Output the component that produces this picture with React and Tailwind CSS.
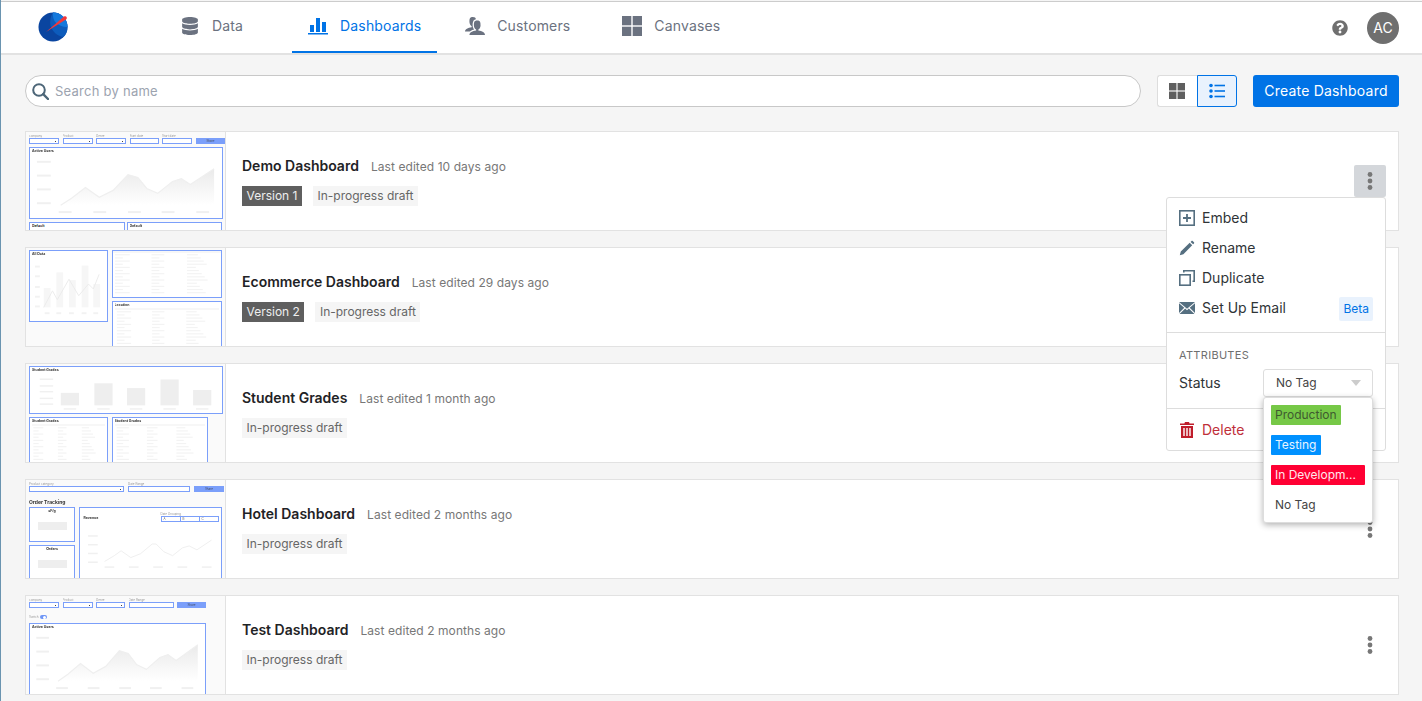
import { FaDatabase, FaQuestionCircle } from "react-icons/fa";
import { ImUsers } from "react-icons/im";

const BLUE = "#0073e6";

const Logo = () => (
  <svg width="30" height="30" viewBox="0 0 30 30" className="-mt-[2px]">
    <circle cx="15" cy="15" r="14.5" fill="#0a45a0" />
    <path d="M15 .5a14.500 14.500 0 0 1 14.500 14.500c0 4-1.500 7.500-4 10-6-1-11-5-13-11-1-5 0-10 2.500-13.500z" fill="#0d5cbc" />
    <path d="M15 .5c4 0 7.500 1.500 10 4 2.500 2.500 4.500 6 4.500 10.500-5 0-10-2-13-6-1.500-3-2-6-1.500-8.500z" fill="#1479dd" />
    <path d="M8 20 26 4.500c1.700-1.200 3.800 1 2.300 2.700z" fill="#f2383a" />
  </svg>
);

const BarsIcon = ({ className }) => (
  <svg width="20" height="18" viewBox="0 0 20 18" fill="currentColor" className={className}>
    <rect x="2" y="8" width="4" height="7" />
    <rect x="8" y="1" width="4" height="14" />
    <rect x="14" y="5" width="4" height="10" />
    <rect x="0" y="16" width="20" height="1.500" />
  </svg>
);

const GridIcon = ({ size = 20, color = "#6b7280" }) => (
  <svg width={size} height={size} viewBox="0 0 20 20" fill={color}>
    <rect x="0" y="0" width="9.300" height="9.300" />
    <rect x="10.700" y="0" width="9.300" height="9.300" />
    <rect x="0" y="10.700" width="9.300" height="9.300" />
    <rect x="10.700" y="10.700" width="9.300" height="9.300" />
  </svg>
);

const SearchIcon = () => (
  <svg width="17" height="17" viewBox="0 0 17 17" fill="none" stroke="#4d6678" strokeWidth="2">
    <circle cx="7" cy="7" r="5.800" />
    <path d="M11.200 11.200 16 16" strokeWidth="2.400" strokeLinecap="round" />
  </svg>
);

const ListIcon = () => (
  <svg width="16" height="16" viewBox="0 0 16 16" fill="#0073e6">
    <circle cx="2" cy="2.500" r="1.800" />
    <circle cx="2" cy="8" r="1.800" />
    <circle cx="2" cy="13.500" r="1.800" />
    <rect x="5.500" y="1.700" width="10.500" height="1.600" />
    <rect x="5.500" y="7.200" width="10.500" height="1.600" />
    <rect x="5.500" y="12.700" width="10.500" height="1.600" />
  </svg>
);

const Kebab = () => (
  <svg width="6" height="18" viewBox="0 0 6 18" fill="#777777">
    <circle cx="3" cy="2.500" r="2.400" />
    <circle cx="3" cy="9" r="2.400" />
    <circle cx="3" cy="15.500" r="2.400" />
  </svg>
);

const EmbedIcon = () => (
  <svg width="16" height="16" viewBox="0 0 16 16" fill="none" stroke="#556f80" strokeWidth="1.600">
    <rect x=".8" y=".8" width="14.400" height="14.400" />
    <path d="M8 4v8M4 8h8" strokeWidth="1.800" />
  </svg>
);

const PencilIcon = () => (
  <svg width="16" height="16" viewBox="0 0 16 16" fill="#556f80">
    <path d="M.8 15.200l1-3.700L10.700 2.800l2.500 2.500-8.800 8.900zM11.600 1.900l.9-.9c.4-.3.900-.3 1.200 0l1.300 1.300c.3.300.3.800 0 1.100l-.9.900z" />
  </svg>
);

const CopyIcon = () => (
  <svg width="16" height="16" viewBox="0 0 16 16" fill="none" stroke="#556f80" strokeWidth="1.600">
    <rect x=".8" y="4.800" width="10.400" height="10.400" />
    <path d="M4.800 2.500V.8h10.400v10.400h-1.700" />
  </svg>
);

const MailIcon = () => (
  <svg width="16" height="12" viewBox="0 0 16 12" fill="#556f80">
    <path d="M0 0h16L8 6.800zM0 1.300v9.600L5.300 5.800zM16 1.300v9.600L10.700 5.800zM6.200 6.600 8 8.200l1.800-1.600L15.500 12H.5z" />
  </svg>
);

const TrashIcon = () => (
  <svg width="14" height="16" viewBox="0 0 14 16" fill="#bf1d2b">
    <path d="M5 0h4l.6 1.500H14V3H0V1.500h4.400zM1 4h12v12H1zM3.300 6v8h1.400V6zM6.300 6v8h1.400V6zM9.300 6v8h1.400V6z" fillRule="evenodd" />
  </svg>
);

// the thumbnails are tiny previews of the dashboards
const FilterField = ({ label, width, select }) => (
  <div style={{ width }} className="shrink-0">
    <div className="text-[3px] leading-[4px] h-[4px] text-[#999999] truncate">{label}</div>
    <div className="h-[6px] border border-[#7b9ffa] bg-white relative">
      {select && <div className="absolute right-[2px] top-[1.500px] w-[1px] h-[1px] bg-[#444444]" />}
    </div>
  </div>
);

const ShareButton = ({ width }) => (
  <div style={{ width }} className="h-[6px] mt-[4px] bg-[#7b9ffa] text-[3px] leading-[6px] text-center text-[#44506a] shrink-0">Share</div>
);

const AREA_PTS = "31,58 42,51 56,40 70,50 84,43 99,27 109,30 118,41 129,46 144,34 153,31 162,37 186,21";

const AreaChart = ({ gradId }) => (
  <svg viewBox="0 0 194 71" preserveAspectRatio="none" className="absolute inset-0 w-full h-full">
    <defs>
      <linearGradient id={gradId} x1="0" y1="0" x2="0" y2="1">
        <stop offset="0" stopColor="#eaeaea" />
        <stop offset="1" stopColor="#ffffff" />
      </linearGradient>
    </defs>
    {[14, 28, 42, 56].map((y) => <rect key={y} x="7" y={y - 1} width="14" height="2" fill="#f0f0f0" />)}
    {[29, 64, 99, 133, 168].map((x) => <rect key={x} x={x} y="64" width="13" height="2" fill="#f0f0f0" />)}
    <polygon points={`31,58 ${AREA_PTS} 186,58`} fill={`url(#${gradId})`} />
    <polyline points={AREA_PTS} fill="none" stroke="#efefef" strokeWidth="1.200" />
  </svg>
);

const MiniTable = () => (
  <svg viewBox="0 0 110 48" preserveAspectRatio="none" className="w-full h-[46px]">
    <rect x="0" y="0" width="110" height="2" fill="#f7f7f7" />
    {[1, 2, 3, 4, 5, 6, 7, 8, 9, 10, 11, 12, 13].map((i) => (
      <g key={i} fill="#f3f3f3">
        <rect x="2" y={i * 3.300} width={8 + ((i * 7) % 14)} height="1.200" />
        <rect x="39" y={i * 3.300} width={8 + ((i * 5) % 10)} height="1.200" />
        <rect x="75" y={i * 3.300} width={8 + ((i * 3) % 14)} height="1.200" />
      </g>
    ))}
  </svg>
);

const PanelTitle = ({ children }) => (
  <div className="text-[3.500px] leading-[5px] font-bold text-[#333333] truncate">{children}</div>
);

const Panel = ({ className, children }) => (
  <div className={`border border-[#7b9ffa] bg-white overflow-hidden ${className}`}>{children}</div>
);

const ThumbDemo = () => (
  <>
    <div className="flex gap-[3.500px]">
      <FilterField label="company" width={30} select />
      <FilterField label="Product" width={30} select />
      <FilterField label="Genre" width={30} select />
      <FilterField label="Start date" width={29} />
      <FilterField label="Start date" width={30} />
      <ShareButton width={30} />
    </div>
    <Panel className="relative mt-[3px] w-[194px] h-[72px] px-[2px] pt-[1px]">
      <AreaChart gradId="a1" />
      <PanelTitle>Active Users</PanelTitle>
    </Panel>
    <div className="flex gap-[2px] mt-[3px]">
      <Panel className="w-[96px] h-[20px] px-[2px] pt-[1px]"><PanelTitle>Default</PanelTitle></Panel>
      <Panel className="w-[96px] h-[20px] px-[2px] pt-[1px]"><PanelTitle>Default</PanelTitle></Panel>
    </div>
  </>
);

const ThumbEcommerce = () => (
  <div className="flex gap-[3.500px]">
    <Panel className="relative w-[79px] h-[72px] px-[2px] pt-[1px] shrink-0">
      <svg viewBox="0 0 79 72" className="absolute inset-0 w-full h-full">
        {[15, 25, 36, 46, 56].map((y) => <rect key={y} x="5" y={y} width="5" height="2" fill="#f2f2f2" />)}
        {[[14, 38], [27, 22], [40, 30], [53, 15], [65, 34]].map(([x, y]) => (
          <rect key={x} x={x} y={y} width="7" height={58 - y} fill="#f6f6f6" />
        ))}
        {[15, 27, 40, 53, 65].map((x) => <rect key={x} x={x} y="63" width="5" height="2" fill="#f2f2f2" />)}
        <polyline points="14,58 23,41 28,50 40,29 50,46 60,34 65,39 71,24" fill="none" stroke="#ebebeb" strokeWidth="1" />
      </svg>
      <PanelTitle>All Data</PanelTitle>
    </Panel>
    <div className="flex flex-col gap-[2.500px] w-[112px]">
      <Panel className="h-[48px]"><MiniTable /></Panel>
      <Panel className="h-[60px] px-[2px] pt-[1px]">
        <PanelTitle>Location</PanelTitle>
        <MiniTable />
      </Panel>
    </div>
  </div>
);

const ThumbGrades = () => (
  <>
    <Panel className="relative w-[194px] h-[48px] px-[2px] pt-[1px]">
      <svg viewBox="0 0 194 48" className="absolute inset-0 w-full h-full">
        {[12, 19, 25, 32, 38].map((y) => <rect key={y} x="7" y={y} width="14" height="1.500" fill="#f0f0f0" />)}
        {[[29, 27], [64, 17], [98, 22], [133, 13], [167, 24]].map(([x, y]) => (
          <g key={x}>
            <rect x={x} y={y} width="19" height={40 - y} fill="#eeeeee" />
            <rect x={x + 3} y="43" width="13" height="1.500" fill="#f0f0f0" />
          </g>
        ))}
      </svg>
      <PanelTitle>Student Grades</PanelTitle>
    </Panel>
    <div className="flex gap-[3.500px] mt-[2.500px]">
      <Panel className="w-[79px] h-[60px] px-[2px] pt-[1px] shrink-0">
        <PanelTitle>Student Grades</PanelTitle>
        <MiniTable />
      </Panel>
      <Panel className="w-[96px] h-[60px] px-[2px] pt-[1px] shrink-0">
        <PanelTitle>Student Grades</PanelTitle>
        <MiniTable />
      </Panel>
    </div>
  </>
);

const ThumbHotel = () => (
  <>
    <div className="flex gap-[4px]">
      <FilterField label="Product category" width={95} select />
      <FilterField label="Date Range" width={62} />
      <ShareButton width={30} />
    </div>
    <div className="text-[5px] leading-[6px] font-bold text-[#333333] mt-[7px]">Order Tracking</div>
    <div className="flex gap-[3.500px] mt-[2px]">
      <div className="flex flex-col gap-[3px] w-[46px] shrink-0">
        <Panel className="h-[35px] text-center pt-[1px]">
          <PanelTitle>sF/g</PanelTitle>
          <div className="mx-auto mt-[8px] w-[29px] h-[8px] bg-[#eeeeee]" />
        </Panel>
        <Panel className="h-[35px] text-center pt-[1px]">
          <PanelTitle>Orders</PanelTitle>
          <div className="mx-auto mt-[8px] w-[29px] h-[8px] bg-[#eeeeee]" />
        </Panel>
      </div>
      <Panel className="relative w-[145px] h-[73px]">
        <svg viewBox="0 0 145 73" className="absolute inset-0 w-full h-full">
          {[28, 37, 46, 55].map((y) => <rect key={y} x="8" y={y} width="10" height="1.500" fill="#f0f0f0" />)}
          {[25, 50, 75, 100, 125].map((x) => <rect key={x} x={x} y="60" width="10" height="1.500" fill="#f0f0f0" />)}
          <polyline points="25,55 35,49 42,44 52,51 62,47 74,37 78,37 86,45 95,49 105,41 112,39 120,43 135,33" fill="none" stroke="#eeeeee" strokeWidth="1" />
        </svg>
        <div className="absolute left-[4px] top-[8px] text-[3.500px] font-bold text-[#333333]">Revenue</div>
        <div className="absolute left-[81px] top-[4px] w-[58px]">
          <div className="text-[3px] leading-[4px] text-[#999999]">Date Grouping</div>
          <div className="flex h-[6px] border border-[#7b9ffa] text-[3px] leading-[4px] text-[#666666]">
            <div className="flex-1 border-r border-[#7b9ffa] pl-[2px]">A</div>
            <div className="flex-1 border-r border-[#7b9ffa] pl-[2px]">B</div>
            <div className="flex-1 pl-[2px]">C</div>
          </div>
        </div>
      </Panel>
    </div>
  </>
);

const ThumbTest = () => (
  <>
    <div className="flex gap-[3.500px]">
      <FilterField label="company" width={30} select />
      <FilterField label="Product" width={30} select />
      <FilterField label="Genre" width={29} select />
      <FilterField label="Date Range" width={45} />
      <ShareButton width={29} />
    </div>
    <div className="flex items-center gap-[1px] mt-[7px] h-[4px] text-[3px] text-[#999999]">
      Switch
      <div className="w-[7px] h-[4px] rounded-full bg-[#6f96f6] flex justify-end items-center pr-[.5px]">
        <div className="w-[3px] h-[3px] rounded-full bg-white" />
      </div>
    </div>
    <Panel className="relative mt-[4px] w-[177px] h-[72px] px-[2px] pt-[1px]">
      <AreaChart gradId="a2" />
      <PanelTitle>Active Users</PanelTitle>
    </Panel>
  </>
);

const dashboards = [
  { name: "Demo Dashboard", edited: "Last edited 10 days ago", version: "Version 1", Thumb: ThumbDemo, menu: true },
  { name: "Ecommerce Dashboard", edited: "Last edited 29 days ago", version: "Version 2", Thumb: ThumbEcommerce },
  { name: "Student Grades", edited: "Last edited 1 month ago", Thumb: ThumbGrades },
  { name: "Hotel Dashboard", edited: "Last edited 2 months ago", Thumb: ThumbHotel },
  { name: "Test Dashboard", edited: "Last edited 2 months ago", Thumb: ThumbTest },
];

const NavItem = ({ icon, label, active, className }) => (
  <div
    className={`flex items-center gap-3 h-full px-4 pb-[2px] text-sm tracking-[.15px] border-b-2 ${
      active ? "border-[#0073e6] text-[#0073e6]" : "border-transparent text-[#6b7280]"
    } ${className}`}
  >
    <span className="w-[20px] flex justify-center">{icon}</span>
    {label}
  </div>
);

const MenuItem = ({ icon, label, children }) => (
  <div className="flex items-center h-[30px] px-3 text-sm text-[#2f3437]">
    <span className="w-[16px] mr-[7px] flex justify-center">{icon}</span>
    <span className="flex-1">{label}</span>
    {children}
  </div>
);

const ActionMenu = () => (
  <div className="absolute z-10 top-[65px] right-[12px] w-[220px] h-[254px] bg-white border border-[#dddddd] rounded-[3px] pt-[5px]">
    <MenuItem icon={<EmbedIcon />} label="Embed" />
    <MenuItem icon={<PencilIcon />} label="Rename" />
    <MenuItem icon={<CopyIcon />} label="Duplicate" />
    <MenuItem icon={<MailIcon />} label="Set Up Email">
      <span className="h-[24px] px-[4px] mt-[2px] mr-0 bg-[#e9f2fd] rounded-[2px] text-xs leading-[24px] text-[#0073e6]">Beta</span>
    </MenuItem>
    <div className="border-t border-[#dddddd] mt-[9px]" />
    <div className="px-3 pt-[15px] text-[11px] leading-[14px] tracking-[.3px] text-[#6f6f6f]">ATTRIBUTES</div>
    <div className="flex items-center justify-between pl-3 pr-3 mt-[7px] text-sm text-[#2f3437]">
      Status
      <div className="w-[110px] h-[28px] flex items-center justify-between pl-[12px] pr-[11px] border border-[#dddddd] rounded-[3px] text-xs text-[#444444]">
        No Tag
        <span className="w-0 h-0 border-x-[5px] border-x-transparent border-t-[6px] border-t-[#cccccc]" />
      </div>
    </div>
    <div className="border-t border-[#dddddd] mt-[11px]" />
    <div className="flex items-center gap-[8px] px-[13px] h-[41px] text-sm text-[#bf2f3a]">
      <TrashIcon />
      Delete
    </div>
    <div className="absolute top-[199px] left-[96px] w-[110px] h-[126px] bg-white border border-[#dddddd] rounded-[3px] shadow-[0_2px_6px_rgba(0,0,0,.3)] pl-[7px] pt-[7px] text-xs">
      <div className="h-[30px]"><span className="inline-block h-[20px] w-[70px] pl-[4px] leading-[20px] rounded-[1px] bg-[#76c847] text-[#3f5a30]">Production</span></div>
      <div className="h-[30px]"><span className="inline-block h-[20px] w-[50px] pl-[4px] leading-[20px] rounded-[1px] bg-[#0091ff] text-[#e8f4ff]">Testing</span></div>
      <div className="h-[30px]"><span className="inline-block h-[20px] w-[94px] pl-[4px] leading-[20px] rounded-[1px] bg-[#ff0033] text-[#ffe8ec]">In Developm...</span></div>
      <div className="h-[30px] pl-[4px] leading-[20px] text-[#444444]">No Tag</div>
    </div>
  </div>
);

const Chip = ({ dark, children }) => (
  <span className={`h-[20px] px-[4.500px] text-xs leading-[20px] ${dark ? "bg-[#5f5f5f] text-[#eeeeee]" : "bg-[#f5f5f5] text-[#666666]"}`}>
    {children}
  </span>
);

const DashboardRow = ({ name, edited, version, Thumb, menu }) => (
  <div className="relative flex h-[100px] bg-white border border-[#e2e2e2]">
    <div className="w-[200px] shrink-0 bg-[#fafafa] border-r border-[#e2e2e2] overflow-hidden">
      <div className="w-[199px] h-[98px] px-[3px] pt-[2px] overflow-hidden blur-[.25px]">
        <Thumb />
      </div>
    </div>
    <div className="flex-1 pl-4 pt-[24px]">
      <div className="flex items-baseline gap-3">
        <span className="text-sm font-semibold text-[#1f2326]">{name}</span>
        <span className="text-xs tracking-[.07px] text-[#777777]">{edited}</span>
      </div>
      <div className="flex gap-[11px] mt-[10px]">
        {version && <Chip dark>{version}</Chip>}
        <Chip>In-progress draft</Chip>
      </div>
    </div>
    <div className={`absolute top-[33px] right-[12px] w-[32px] h-[32px] flex items-center justify-center rounded-[2px] ${menu ? "bg-[#d4d7db]" : ""}`}>
      <Kebab />
    </div>
    {menu && <ActionMenu />}
  </div>
);

export default function App() {
  return (
    <div className="h-[701px] overflow-hidden bg-[#f5f5f5] pt-px border-l border-[#6a94b0] font-['Inter',sans-serif]">
      <header className="flex items-center h-[54px] bg-white border-t border-b-2 border-t-[#cccccc] border-b-[#e2e2e2] pl-[37px] pr-[23px]">
        <Logo />
        <nav className="flex items-center h-full ml-[96px]">
          <NavItem icon={<FaDatabase size={18} color="#6b7280" />} label="Data" />
          <NavItem icon={<BarsIcon />} label="Dashboards" active className="ml-[33px]" />
          <NavItem icon={<ImUsers size={20} color="#6b7280" />} label="Customers" className="ml-[12px]" />
          <NavItem icon={<GridIcon />} label="Canvases" className="ml-[20px]" />
        </nav>
        <div className="ml-auto flex items-center gap-[19px]">
          <FaQuestionCircle size={16} color="#6f6f6f" />
          <div className="w-[32px] h-[32px] rounded-full bg-[#6f6f6f] flex items-center justify-center text-sm text-white">AC</div>
        </div>
      </header>

      <div className="flex items-center gap-4 mt-[20px] mx-[24px] mr-[23px]">
        <div className="flex-1 flex items-center gap-[6px] h-[32px] pl-[6px] bg-white border border-[#c8c8c8] rounded-full text-[13px] tracking-[.25px] text-[#9ca3af]">
          <SearchIcon />
          <span className="mt-[1px]">Search by name</span>
        </div>
        <div className="flex h-[32px]">
          <div className="w-[40px] flex items-center justify-center pr-[1px] bg-white border border-r-0 border-[#dddddd] rounded-l-[3px]">
            <GridIcon size={16} color="#5f5f5f" />
          </div>
          <div className="w-[40px] flex items-center justify-center bg-[#e9f2fd] border border-[#0073e6] rounded-r-[3px]">
            <ListIcon />
          </div>
        </div>
        <button style={{ backgroundColor: BLUE }} className="w-[146px] h-[32px] rounded-[3px] text-sm tracking-[.2px] text-white">
          Create Dashboard
        </button>
      </div>

      <div className="flex flex-col gap-4 mt-[24px] mx-[24px] mr-[23px]">
        {dashboards.map((d) => (
          <DashboardRow key={d.name} {...d} />
        ))}
      </div>
    </div>
  );
}
